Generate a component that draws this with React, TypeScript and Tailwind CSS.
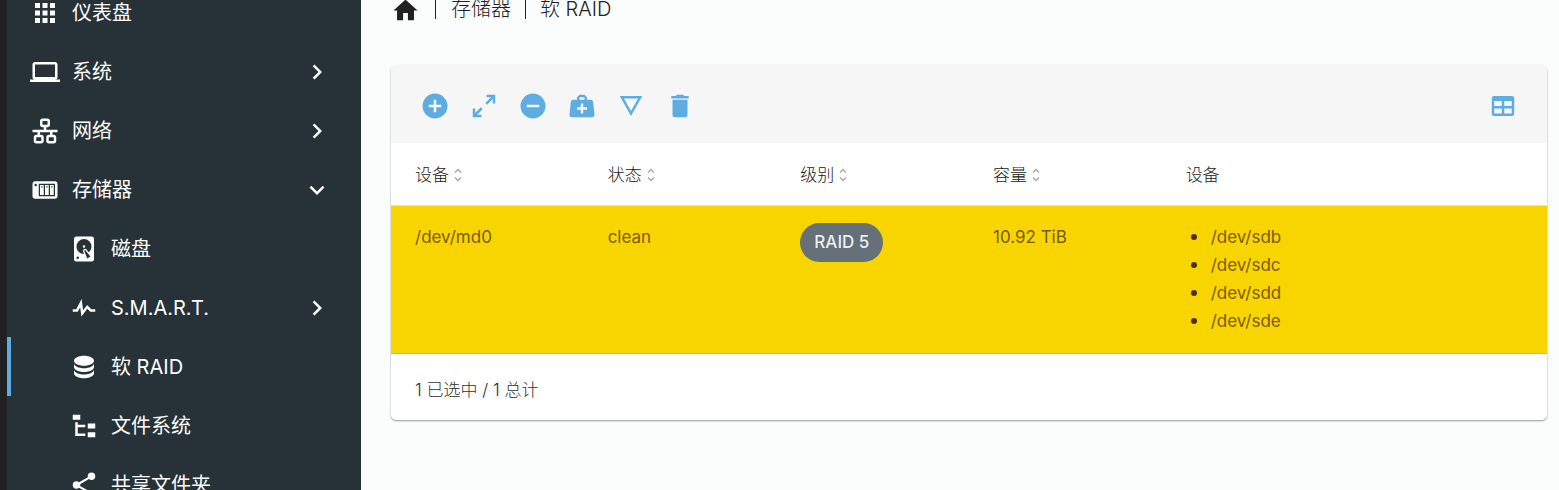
import React from "react";

const icons = {
  apps: "M16,20H20V16H16M16,14H20V10H16M10,8H14V4H10M16,8H20V4H16M10,14H14V10H10M4,14H8V10H4M4,20H8V16H4M10,20H14V16H10M4,8H8V4H4V8Z",
  laptop: "M4,6H20V16H4M20,18A2,2 0 0,0 22,16V6C22,4.89 21.1,4 20,4H4C2.89,4 2,4.89 2,6V16A2,2 0 0,0 4,18H0V20H24V18H20Z",
  lan: "M10,2C8.89,2 8,2.89 8,4V7C8,8.11 8.89,9 10,9H11V11H2V13H6V15H5C3.89,15 3,15.89 3,17V20C3,21.11 3.89,22 5,22H9C10.11,22 11,21.11 11,20V17C11,15.89 10.11,15 9,15H8V13H16V15H15C13.89,15 13,15.89 13,17V20C13,21.11 13.89,22 15,22H19C20.11,22 21,21.11 21,20V17C21,15.89 20.11,15 19,15H18V13H22V11H13V9H14C15.11,9 16,8.11 16,7V4C16,2.89 15.11,2 14,2H10M10,4H14V7H10V4M5,17H9V20H5V17M15,17H19V20H15V17Z",
  nas: "M4,5C2.89,5 2,5.89 2,7V17C2,18.11 2.89,19 4,19H20C21.11,19 22,18.11 22,17V7C22,5.89 21.11,5 20,5H4M4.5,7A1,1 0 0,1 5.5,8A1,1 0 0,1 4.5,9A1,1 0 0,1 3.5,8A1,1 0 0,1 4.5,7M7,7H20V17H7V7M8,8V16H11V8H8M12,8V16H15V8H12M16,8V16H19V8H16M9,9H10V10H9V9M13,9H14V10H13V9M17,9H18V10H17V9Z",
  harddisk: "M6,2H18A2,2 0 0,1 20,4V20A2,2 0 0,1 18,22H6A2,2 0 0,1 4,20V4A2,2 0 0,1 6,2M12,4A6,6 0 0,0 6,10C6,13.31 8.69,16 12.1,16L11.22,13.77C10.95,13.29 11.11,12.68 11.59,12.4L12.45,11.9C12.93,11.63 13.54,11.79 13.82,12.27L15.74,14.69C17.12,13.59 18,11.9 18,10A6,6 0 0,0 12,4M12,9A1,1 0 0,1 13,10A1,1 0 0,1 12,11A1,1 0 0,1 11,10A1,1 0 0,1 12,9M7,18A1,1 0 0,0 6,19A1,1 0 0,0 7,20A1,1 0 0,0 8,19A1,1 0 0,0 7,18M12.09,13.27L14.58,19.58L17.17,18.08L12.95,12.77L12.09,13.27Z",
  pulse: "M3,13H5.79L10.1,4.79L11.28,13.75L14.5,9.66L17.83,13H21V15H17L14.67,12.67L9.92,18.73L8.94,11.31L7,15H3V13Z",
  database: "M12,3C7.58,3 4,4.79 4,7C4,9.21 7.58,11 12,11C16.42,11 20,9.21 20,7C20,4.79 16.42,3 12,3M4,9V12C4,14.21 7.58,16 12,16C16.42,16 20,14.21 20,12V9C20,11.21 16.42,13 12,13C7.58,13 4,11.21 4,9M4,14V17C4,19.21 7.58,21 12,21C16.42,21 20,19.21 20,17V14C20,16.21 16.42,18 12,18C7.58,18 4,16.21 4,14Z",
  fileTree: "M3,3H9V7H3V3M15,10H21V14H15V10M15,17H21V21H15V17M13,13H7V18H13V20H5V9H7V11H13V13Z",
  share: "M18,16.08C17.24,16.08 16.56,16.38 16.04,16.85L8.91,12.7C8.96,12.47 9,12.24 9,12C9,11.76 8.96,11.53 8.91,11.3L15.96,7.19C16.5,7.69 17.21,8 18,8A3,3 0 0,0 21,5A3,3 0 0,0 18,2A3,3 0 0,0 15,5C15,5.24 15.04,5.47 15.09,5.7L8.04,9.81C7.5,9.31 6.79,9 6,9A3,3 0 0,0 3,12A3,3 0 0,0 6,15C6.79,15 7.5,14.69 8.04,14.19L15.16,18.34C15.11,18.55 15.08,18.77 15.08,19C15.08,20.61 16.39,21.91 18,21.91C19.61,21.91 20.92,20.61 20.92,19A2.92,2.92 0 0,0 18,16.08Z",
  chevronRight: "M8.59,16.58L13.17,12L8.59,7.41L10,6L16,12L10,18L8.59,16.58Z",
  chevronDown: "M7.41,8.58L12,13.17L16.59,8.58L18,10L12,16L6,10L7.41,8.58Z",
  home: "M10,20V14H14V20H19V12H22L12,3L2,12H5V20H10Z",
  plus: "M17,13H13V17H11V13H7V11H11V7H13V11H17M12,2A10,10 0 0,0 2,12A10,10 0 0,0 12,22A10,10 0 0,0 22,12A10,10 0 0,0 12,2Z",
  expand: "M10,21V19H6.41L10.91,14.5L9.5,13.09L5,17.59V14H3V21H10M14.5,10.91L19,6.41V10H21V3H14V5H17.59L13.09,9.5L14.5,10.91Z",
  minus: "M17,13H7V11H17M12,2A10,10 0 0,0 2,12A10,10 0 0,0 12,22A10,10 0 0,0 22,12A10,10 0 0,0 12,2Z",
  medical: "M10,3L8,5V7H5C3.85,7 3.12,8 3,9L2,19C1.88,20 2.54,21 4,21H20C21.46,21 22.12,20 22,19L21,9C20.88,8 20.06,7 19,7H16V5L14,3H10M10,5H14V7H10V5M11,10H13V13H16V15H13V18H11V15H8V13H11V10Z",
  details: "M6.38,6H17.63L12,16L6.38,6M3,4L12,20L21,4H3Z",
  trash: "M19,4H15.5L14.5,3H9.5L8.5,4H5V6H19V4M6,19A2,2 0 0,0 8,21H16A2,2 0 0,0 18,19V7H6V19Z",
  table: "M5,4H19A2,2 0 0,1 21,6V18A2,2 0 0,1 19,20H5A2,2 0 0,1 3,18V6A2,2 0 0,1 5,4M5,8V12H11V8H5M13,8V12H19V8H13M5,14V18H11V14H5M13,14V18H19V14H13Z",
};

type IconName = keyof typeof icons;

function Icon({ name, className = "size-[30px]" }: { name: IconName; className?: string }) {
  return (
    <svg viewBox="0 0 24 24" fill="currentColor" fillRule="evenodd" aria-hidden="true" className={`shrink-0 ${className}`}>
      <path d={icons[name]} />
    </svg>
  );
}

type NavItem = { label: string; icon: IconName; nested?: boolean; arrow?: IconName; active?: boolean };

const navItems: NavItem[] = [
  { label: "仪表盘", icon: "apps" },
  { label: "系统", icon: "laptop", arrow: "chevronRight" },
  { label: "网络", icon: "lan", arrow: "chevronRight" },
  { label: "存储器", icon: "nas", arrow: "chevronDown" },
  { label: "磁盘", icon: "harddisk", nested: true },
  { label: "S.M.A.R.T.", icon: "pulse", nested: true, arrow: "chevronRight" },
  { label: "软 RAID", icon: "database", nested: true, active: true },
  { label: "文件系统", icon: "fileTree", nested: true },
  { label: "共享文件夹", icon: "share", nested: true },
];

const actions: { label: string; icon: IconName }[] = [
  { label: "创建", icon: "plus" },
  { label: "扩展", icon: "expand" },
  { label: "移除", icon: "minus" },
  { label: "恢复", icon: "medical" },
  { label: "详情", icon: "details" },
  { label: "删除", icon: "trash" },
];

const columns = [
  { label: "设备", sortable: true, width: "w-1/6" },
  { label: "状态", sortable: true, width: "w-1/6" },
  { label: "级别", sortable: true, width: "w-1/6" },
  { label: "容量", sortable: true, width: "w-1/6" },
  { label: "设备", sortable: false, width: "w-1/3" },
];

const members = ["/dev/sdb", "/dev/sdc", "/dev/sdd", "/dev/sde"];

function Sidebar() {
  return (
    <nav className="w-[361px] shrink-0 overflow-hidden border-l-[7px] border-[#212121] bg-[#263238] text-white">
      <ul className="-mt-[17px]">
        {navItems.map((item) => (
          <li key={item.label}>
            <a
              href="#"
              aria-current={item.active ? "page" : undefined}
              className={`flex h-[59px] items-center gap-3 border-l-4 pr-[29px] text-xl ${item.active ? "border-[#5dade2]" : "border-transparent"} ${item.nested ? "pl-[58px]" : "pl-[19px]"}`}
            >
              <Icon name={item.icon} />
              <span className="flex-1">{item.label}</span>
              {item.arrow && <Icon name={item.arrow} />}
            </a>
          </li>
        ))}
      </ul>
    </nav>
  );
}

function Breadcrumb() {
  return (
    <nav aria-label="面包屑" className="-mt-[5px] flex h-7 items-center text-xl font-light text-[#212121]">
      <a href="#" aria-label="首页" className="pt-0.5">
        <Icon name="home" className="size-[29px]" />
      </a>
      <span className="mx-[15px] h-5 w-px bg-[#212121]" />
      <a href="#">存储器</a>
      <span className="mx-3.5 h-5 w-px bg-[#212121]" />
      <a href="#">软 RAID</a>
    </nav>
  );
}

function SortIcon() {
  return (
    <svg viewBox="0 0 8 14" fill="none" stroke="#a6a6a6" strokeWidth="1.4" aria-hidden="true" className="h-3.5 w-2">
      <path d="M1 4.5L4 1.5L7 4.5M1 9.5L4 12.5L7 9.5" />
    </svg>
  );
}

export default function App() {
  return (
    <div className="flex h-screen overflow-hidden bg-[#fbfcfc] font-['Inter','Noto_Sans_CJK_SC',sans-serif]">
      <Sidebar />
      <main className="min-w-0 flex-1 pr-3 pl-[30px]">
        <Breadcrumb />
        <section className="mt-[42px] overflow-hidden rounded-[5px] bg-white shadow-[0_1px_2px_rgba(0,0,0,0.4)]">
          <div className="flex h-[78px] items-center bg-[#f6f6f6] px-[29px] pt-1 text-[#5dade2]">
            <div className="flex flex-1 gap-[19px]">
              {actions.map((a) => (
                <button key={a.label} type="button" aria-label={a.label}>
                  <Icon name={a.icon} />
                </button>
              ))}
            </div>
            <button type="button" aria-label="列">
              <Icon name="table" />
            </button>
          </div>
          <table className="w-full table-fixed border-collapse text-left text-[17px] leading-7">
            <thead>
              <tr className="h-[62px] border-b border-[#e0e0e0] text-[#212121]">
                {columns.map((c, i) => (
                  <th key={i} scope="col" className={`px-6 pt-0.5 font-light ${c.width}`}>
                    <span className="flex items-center gap-[5px]">
                      {c.label}
                      {c.sortable && <SortIcon />}
                    </span>
                  </th>
                ))}
              </tr>
            </thead>
            <tbody>
              <tr className="h-[148px] border-b border-[#d0c040] bg-[#f9d500] align-top text-[#7a5a0c]">
                <td className="px-6 pt-[17px]">/dev/md0</td>
                <td className="px-6 pt-[17px]">clean</td>
                <td className="px-6 pt-[17px]">
                  <span className="flex h-[39px] w-fit items-center rounded-full bg-[#667078] px-3.5 font-medium text-[#eceff1]">RAID 5</span>
                </td>
                <td className="px-6 pt-[17px]">10.92 TiB</td>
                <td className="px-6 pt-[17px]">
                  <ul className="pl-[5px]">
                    {members.map((m) => (
                      <li key={m} className="flex items-center gap-3.5 before:size-1.5 before:rounded-full before:bg-[#4a3010]">
                        {m}
                      </li>
                    ))}
                  </ul>
                </td>
              </tr>
            </tbody>
          </table>
          <footer className="flex h-[66px] items-center px-6 pt-2 text-[17px] font-light text-[#303030]">1 已选中 / 1 总计</footer>
        </section>
      </main>
    </div>
  );
}
